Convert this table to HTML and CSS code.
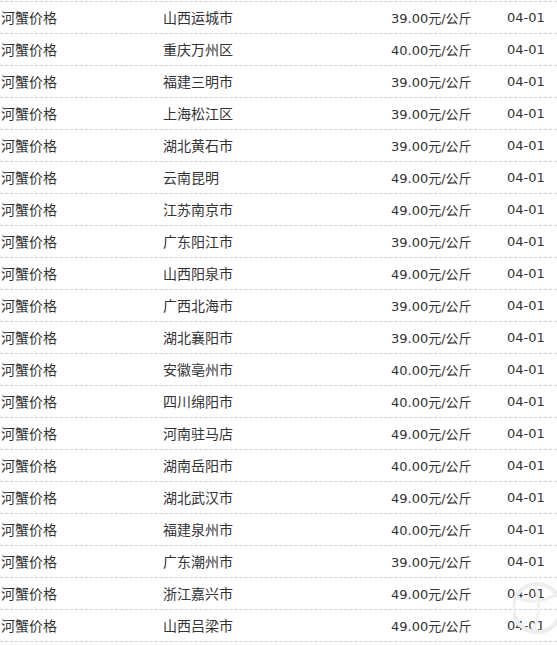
FILE: index.html
```html
<!DOCTYPE html>
<html lang="zh">
<head>
<meta charset="utf-8">
<link rel="stylesheet" href="styles.css">
</head>
<body>
<ul class="list">
<li class="row"><span class="name">河蟹价格</span><span class="place">山西运城市</span><span class="price">39.00元/公斤</span><span class="date">04-01</span></li>
<li class="row"><span class="name">河蟹价格</span><span class="place">重庆万州区</span><span class="price">40.00元/公斤</span><span class="date">04-01</span></li>
<li class="row"><span class="name">河蟹价格</span><span class="place">福建三明市</span><span class="price">39.00元/公斤</span><span class="date">04-01</span></li>
<li class="row"><span class="name">河蟹价格</span><span class="place">上海松江区</span><span class="price">39.00元/公斤</span><span class="date">04-01</span></li>
<li class="row"><span class="name">河蟹价格</span><span class="place">湖北黄石市</span><span class="price">39.00元/公斤</span><span class="date">04-01</span></li>
<li class="row"><span class="name">河蟹价格</span><span class="place">云南昆明</span><span class="price">49.00元/公斤</span><span class="date">04-01</span></li>
<li class="row"><span class="name">河蟹价格</span><span class="place">江苏南京市</span><span class="price">49.00元/公斤</span><span class="date">04-01</span></li>
<li class="row"><span class="name">河蟹价格</span><span class="place">广东阳江市</span><span class="price">39.00元/公斤</span><span class="date">04-01</span></li>
<li class="row"><span class="name">河蟹价格</span><span class="place">山西阳泉市</span><span class="price">49.00元/公斤</span><span class="date">04-01</span></li>
<li class="row"><span class="name">河蟹价格</span><span class="place">广西北海市</span><span class="price">39.00元/公斤</span><span class="date">04-01</span></li>
<li class="row"><span class="name">河蟹价格</span><span class="place">湖北襄阳市</span><span class="price">39.00元/公斤</span><span class="date">04-01</span></li>
<li class="row"><span class="name">河蟹价格</span><span class="place">安徽亳州市</span><span class="price">40.00元/公斤</span><span class="date">04-01</span></li>
<li class="row"><span class="name">河蟹价格</span><span class="place">四川绵阳市</span><span class="price">40.00元/公斤</span><span class="date">04-01</span></li>
<li class="row"><span class="name">河蟹价格</span><span class="place">河南驻马店</span><span class="price">49.00元/公斤</span><span class="date">04-01</span></li>
<li class="row"><span class="name">河蟹价格</span><span class="place">湖南岳阳市</span><span class="price">40.00元/公斤</span><span class="date">04-01</span></li>
<li class="row"><span class="name">河蟹价格</span><span class="place">湖北武汉市</span><span class="price">49.00元/公斤</span><span class="date">04-01</span></li>
<li class="row"><span class="name">河蟹价格</span><span class="place">福建泉州市</span><span class="price">40.00元/公斤</span><span class="date">04-01</span></li>
<li class="row"><span class="name">河蟹价格</span><span class="place">广东潮州市</span><span class="price">39.00元/公斤</span><span class="date">04-01</span></li>
<li class="row"><span class="name">河蟹价格</span><span class="place">浙江嘉兴市</span><span class="price">49.00元/公斤</span><span class="date">04-01</span></li>
<li class="row"><span class="name">河蟹价格</span><span class="place">山西吕梁市</span><span class="price">49.00元/公斤</span><span class="date">04-01</span></li>
</ul>
<svg class="watermark" width="44" height="64" viewBox="0 0 44 64">
  <circle cx="24" cy="32" r="24" fill="none" stroke="#ededed" stroke-width="4"/>
  <path d="M4 22 Q24 30 44 18" fill="none" stroke="#f0f0f0" stroke-width="3"/>
  <path d="M22 10 Q30 32 20 56" fill="none" stroke="#f0f0f0" stroke-width="3"/>
</svg>
</body>
</html>
```

FILE: styles.css
```css
html, body {
  margin: 0;
  padding: 0;
  background: #fff;
}
body {
  position: relative;
  width: 557px;
  height: 646px;
  overflow: hidden;
  font-family: "DejaVu Sans", "Noto Sans CJK SC", sans-serif;
  font-size: 13px;
  color: #333;
}
.list {
  list-style: none;
  margin: 0;
  padding: 1px 0 0 0;
}
.row {
  display: grid;
  grid-template-columns: 162px 228px 116px 1fr;
  align-items: center;
  height: 30px;
  padding: 0 0 1px 1px;
  border-top: 1px dashed #cfcfcf;
}
.row:last-child {
  border-bottom: 1px dashed #cfcfcf;
}
.name, .place {
  font-family: "Noto Sans CJK SC", sans-serif;
  font-size: 14px;
}
.watermark {
  position: absolute;
  right: 0;
  bottom: 6px;
}
```
